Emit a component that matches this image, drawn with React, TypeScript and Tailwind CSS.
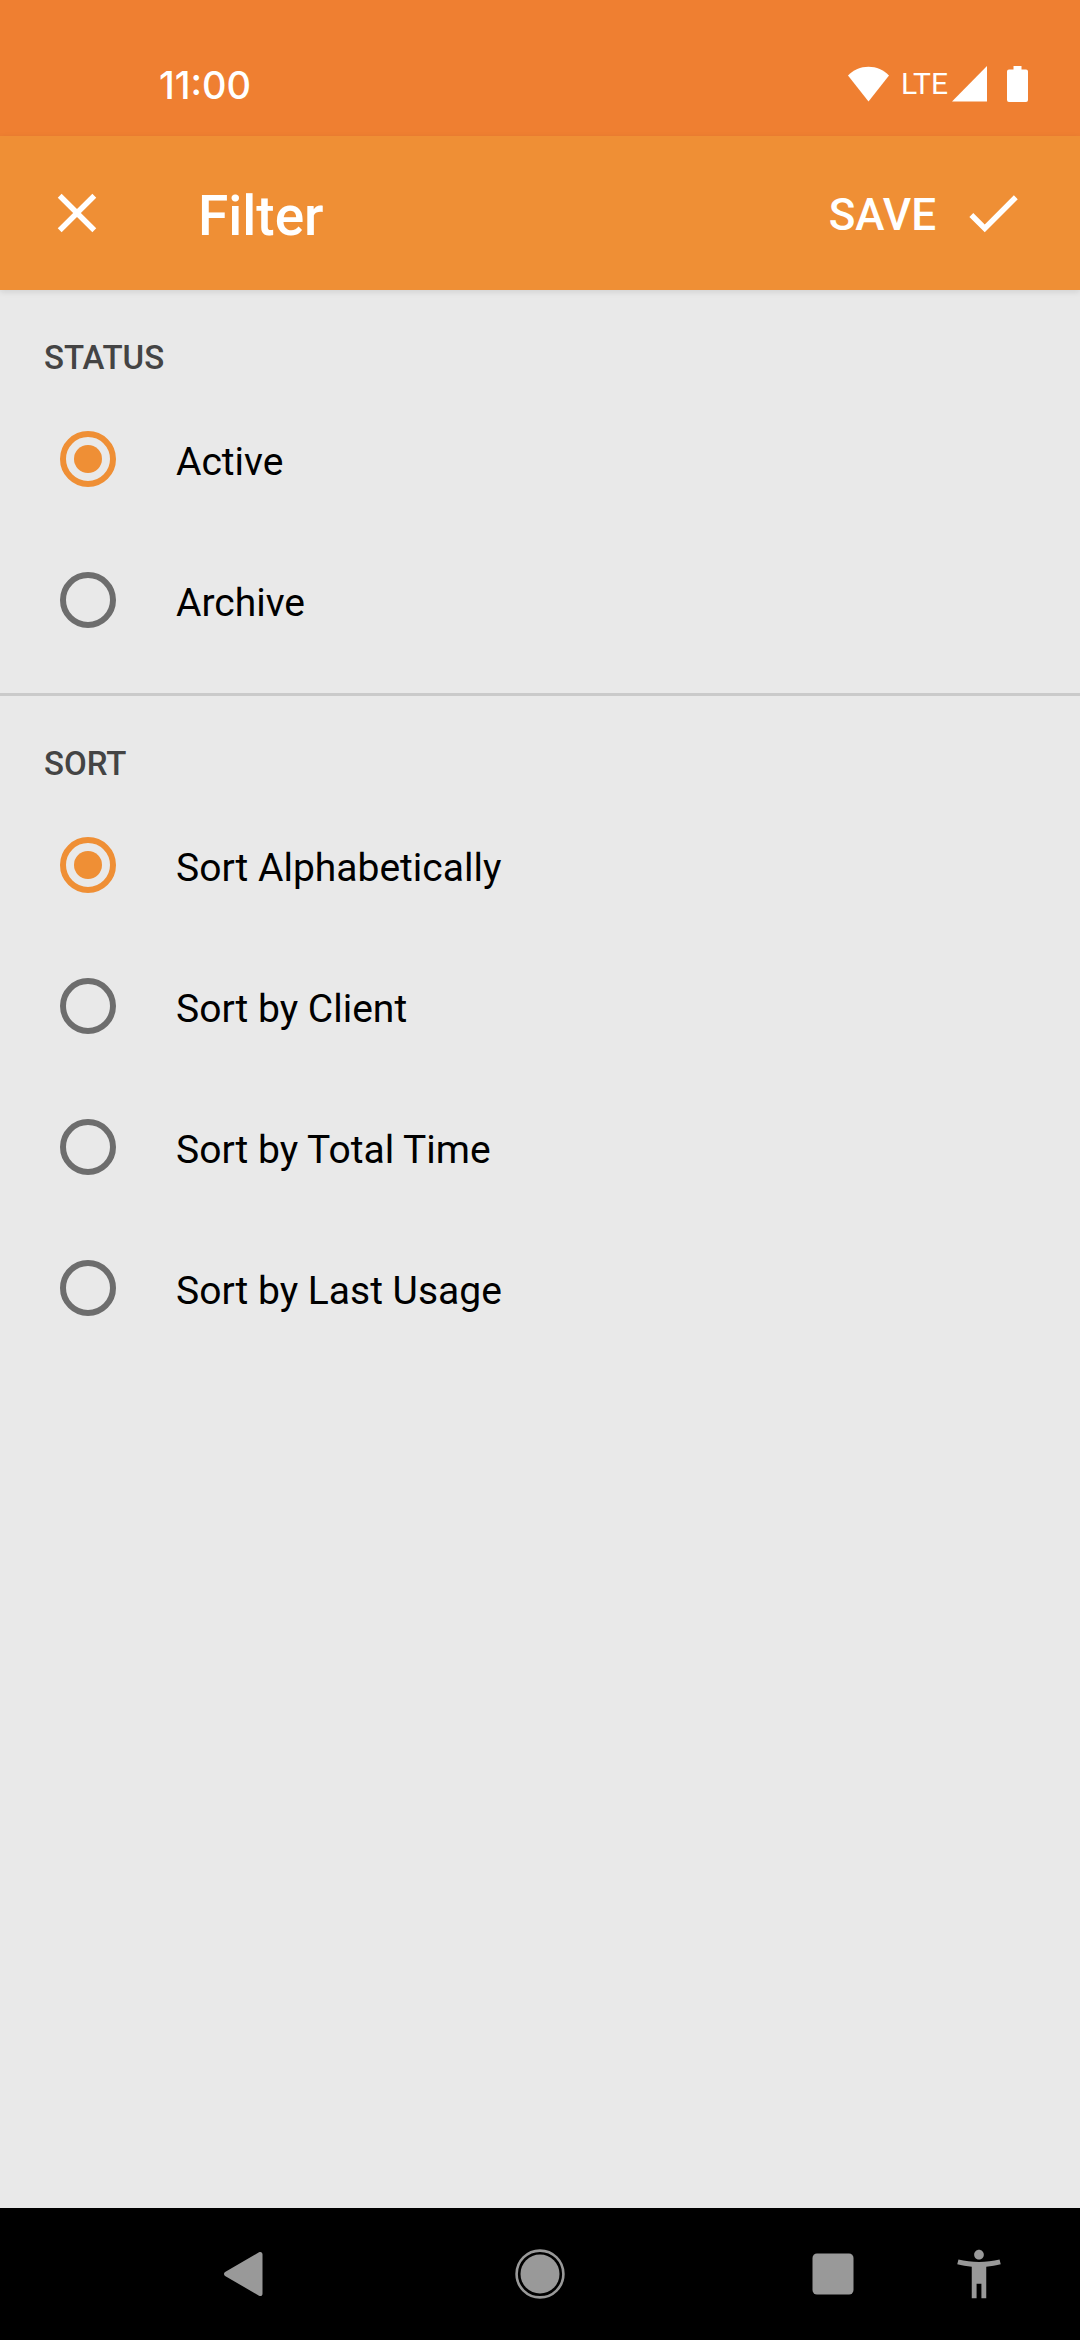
import React, { useState } from 'react';
import { MdAccessibilityNew, MdCheck, MdClose } from 'react-icons/md';

interface Option {
  value: string;
  label: string;
}

interface RadioSectionProps {
  name: string;
  title: string;
  options: Option[];
  selected: string;
  onChange: (value: string) => void;
}

const STATUS_OPTIONS: Option[] = [
  { value: 'active', label: 'Active' },
  { value: 'archive', label: 'Archive' },
];

const SORT_OPTIONS: Option[] = [
  { value: 'alphabetical', label: 'Sort Alphabetically' },
  { value: 'client', label: 'Sort by Client' },
  { value: 'total-time', label: 'Sort by Total Time' },
  { value: 'last-usage', label: 'Sort by Last Usage' },
];

function StatusBar() {
  return (
    <div className="flex h-[136px] items-end justify-between bg-[#ef7f31] pr-[52px] pb-7 pl-[159px] text-white">
      <span className="font-[Inter,sans-serif] text-[38px] leading-[46px] font-medium">11:00</span>
      <div className="flex h-12 items-center">
        <svg className="h-9 w-[41px]" viewBox="0 0 41 36" fill="currentColor">
          <path d="M20.5 35.5 0 9.5C5.5 3.8 12.5.8 20.5.8S35.5 3.8 41 9.5z" />
        </svg>
        <span className="ml-3 text-[30px] leading-[48px]">LTE</span>
        <svg className="ml-1 h-9 w-[35px]" viewBox="0 0 35 36" fill="currentColor">
          <path d="M35 0v35.5H0z" />
        </svg>
        <svg className="ml-5 h-9 w-[21px]" viewBox="0 0 21 36" fill="currentColor">
          <path d="M6.5 0h8v3.5H19a2 2 0 0 1 2 2V34a2 2 0 0 1-2 2H2a2 2 0 0 1-2-2V5.5a2 2 0 0 1 2-2h4.5z" />
        </svg>
      </div>
    </div>
  );
}

function RadioSection({ name, title, options, selected, onChange }: RadioSectionProps) {
  return (
    <section role="radiogroup" aria-labelledby={`${name}-title`} className="pt-12 pb-[23px]">
      <h2 id={`${name}-title`} className="mb-2.5 px-11 text-[33px] leading-[40px] font-medium text-[#444444]">
        {title}
      </h2>
      {options.map((option) => (
        <label key={option.value} className="flex h-[141px] cursor-pointer items-center gap-[60px] pl-[60px]">
          <input
            type="radio"
            name={name}
            value={option.value}
            checked={selected === option.value}
            onChange={() => onChange(option.value)}
            className="flex size-14 shrink-0 appearance-none items-center justify-center rounded-full border-6 border-[#6d6d6d] before:size-7 before:rounded-full checked:border-[#ef8f35] checked:before:bg-[#ef8f35]"
          />
          <span className="pt-1.5 text-[39px] leading-[48px] text-black">{option.label}</span>
        </label>
      ))}
    </section>
  );
}

function NavigationBar() {
  return (
    <nav className="flex h-[132px] items-center justify-between bg-black pr-7 pl-[174px] text-[#999999]">
      <button type="button" aria-label="Back" className="flex w-[146px] justify-center">
        <svg className="size-[66px]" viewBox="0 0 66 66" fill="currentColor">
          <path d="M11.5 30.8 45 11.3c1.8-1 3.5 0 3.5 2v39.4c0 2-1.7 3-3.5 2L11.5 35.2c-2-1.2-2-3.2 0-4.4z" />
        </svg>
      </button>
      <button type="button" aria-label="Home" className="flex w-[146px] justify-center">
        <svg className="size-[66px]" viewBox="0 0 66 66">
          <circle cx="33" cy="33" r="23.4" fill="none" stroke="currentColor" strokeWidth="2.6" />
          <circle cx="33" cy="33" r="19.5" fill="currentColor" />
        </svg>
      </button>
      <div className="flex items-center">
        <button type="button" aria-label="Recent apps" className="flex w-[146px] justify-center">
          <svg className="size-[66px]" viewBox="0 0 66 66" fill="currentColor">
            <rect x="12.5" y="12.5" width="41" height="41" rx="4.5" />
          </svg>
        </button>
        <button type="button" aria-label="Accessibility" className="flex w-[146px] justify-center">
          <MdAccessibilityNew className="size-[58px]" />
        </button>
      </div>
    </nav>
  );
}

export default function App() {
  const [status, setStatus] = useState('active');
  const [sort, setSort] = useState('alphabetical');

  return (
    <div className="flex min-h-screen flex-col bg-[#e9e9e9] font-[Roboto,sans-serif]">
      <StatusBar />

      <header className="flex h-[154px] items-center bg-[#ef8f35] pr-[54px] pl-11 text-white shadow-[0_2px_6px_rgba(0,0,0,0.1)]">
        <button type="button" aria-label="Close">
          <MdClose className="size-[66px]" />
        </button>
        <h1 className="ml-[88px] flex-1 pt-1.5 text-[55px] leading-[64px] font-medium">Filter</h1>
        <button type="button" className="flex items-center gap-6 text-[44px] leading-[52px] font-medium">
          <span className="pt-1">SAVE</span>
          <MdCheck className="size-[66px]" />
        </button>
      </header>

      <main className="flex-1">
        <RadioSection name="status" title="STATUS" options={STATUS_OPTIONS} selected={status} onChange={setStatus} />
        <hr className="border-t-3 border-[#cacaca]" />
        <RadioSection name="sort" title="SORT" options={SORT_OPTIONS} selected={sort} onChange={setSort} />
      </main>

      <NavigationBar />
    </div>
  );
}
